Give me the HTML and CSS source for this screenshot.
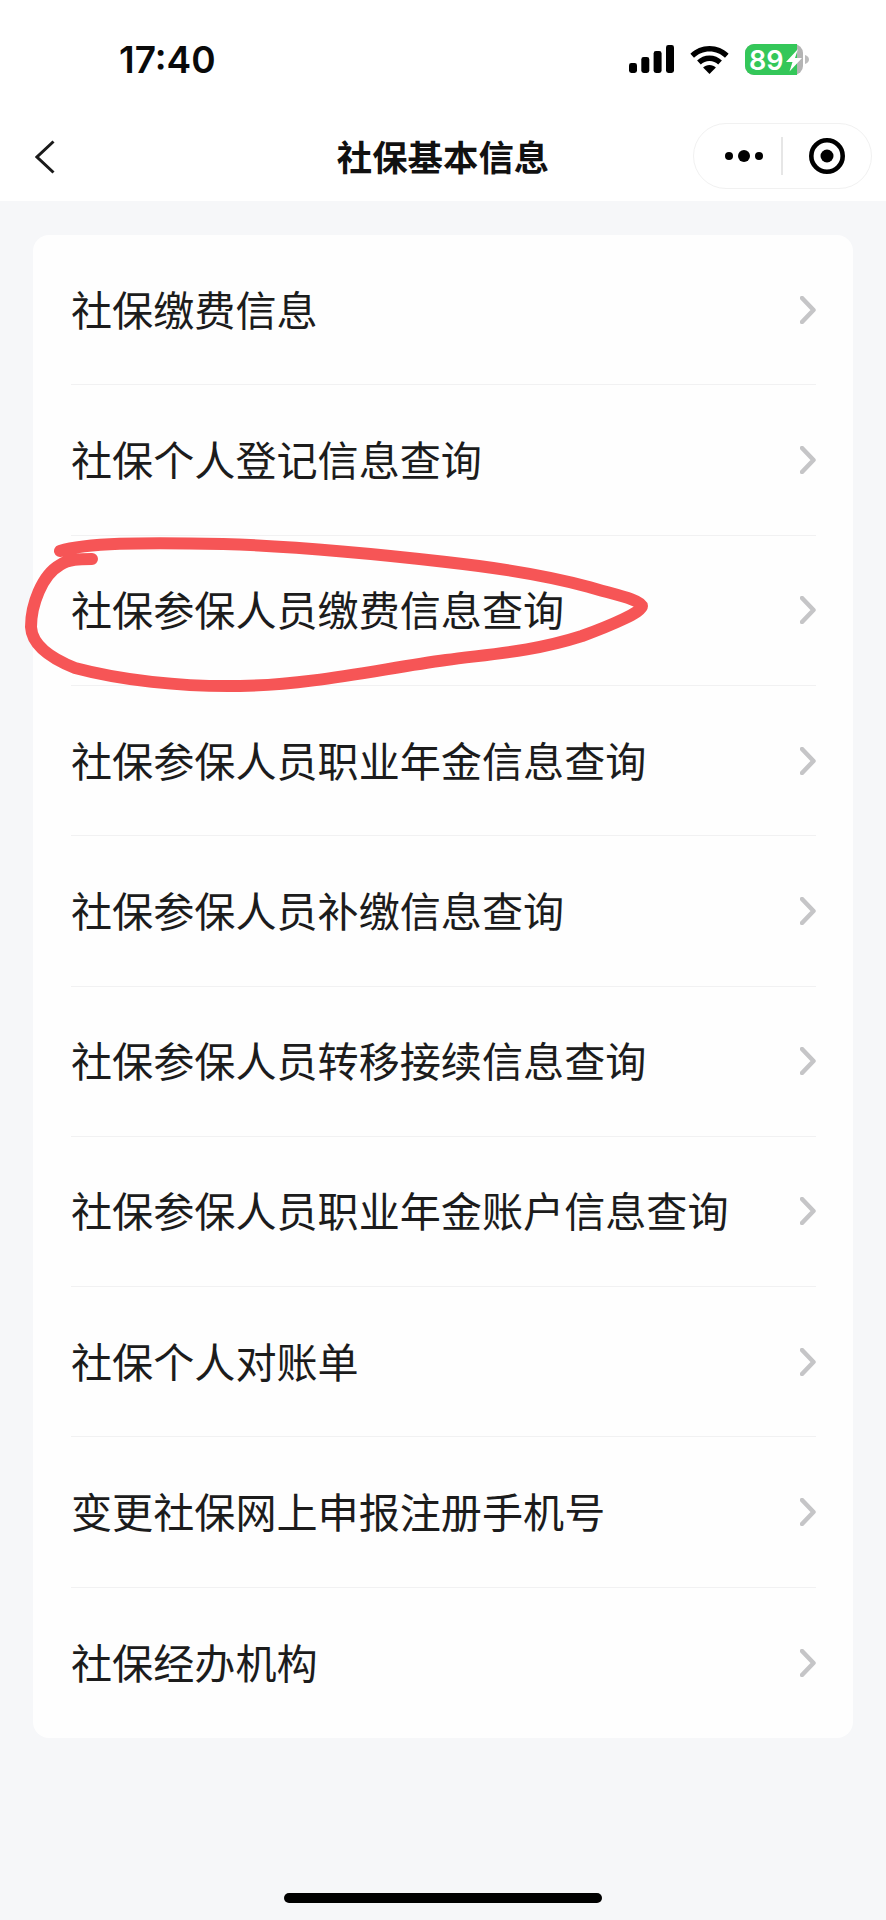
FILE: index.html
```html
<!DOCTYPE html>
<html lang="zh-CN">
<head>
<meta charset="utf-8">
<title>社保基本信息</title>
<link rel="stylesheet" href="styles.css">
</head>
<body>
<div class="page">
  <header class="header">
    <div class="status">
      <span class="time">17:40</span>
      <div class="status-icons">
        <svg class="signal" viewBox="0 0 45 28" aria-hidden="true">
          <rect x="0" y="18" width="8" height="10" rx="2.4"/>
          <rect x="12.3" y="12" width="8" height="16" rx="2.4"/>
          <rect x="24.6" y="6" width="8" height="22" rx="2.4"/>
          <rect x="37" y="0" width="8" height="28" rx="2.4"/>
        </svg>
        <svg class="wifi" viewBox="0 0 39 28" aria-hidden="true">
          <path d="M19.5 0C12 0 5.4 3 .4 7.8l3.6 3.9C8 7.8 13.4 5.4 19.5 5.4s11.5 2.4 15.5 6.3l3.6-3.9C33.6 3 27 0 19.5 0z"/>
          <path d="M19.5 9.6c-4.8 0-9.2 1.9-12.4 5l3.7 3.9c2.3-2.2 5.3-3.5 8.7-3.5s6.4 1.3 8.7 3.5l3.7-3.9c-3.2-3.1-7.6-5-12.4-5z"/>
          <path d="M19.5 19c-2.5 0-4.8 1-6.4 2.6l6.4 6.4 6.4-6.4C24.3 20 22 19 19.500 19z"/>
        </svg>
        <svg class="battery" viewBox="0 0 64 31" role="img" aria-label="89">
          <path class="bat-nub" d="M60 11c2.500.6 4 2.300 4 4.500s-1.500 3.900-4 4.500z"/>
          <rect class="bat-gray" x="0" y="0" width="58" height="31" rx="9"/>
          <path class="bat-green" d="M9 0h43v31H9a9 9 0 0 1-9-9V9a9 9 0 0 1 9-9z"/>
          <text class="bat-text" x="4" y="25.500">89</text>
          <path class="bat-bolt" d="M53 5 41 18h6.500l-3 9.500L57 14h-7z"/>
        </svg>
      </div>
    </div>
    <nav class="nav">
      <svg class="back" viewBox="0 0 20 34" aria-hidden="true"><path d="M18.500 1.500 2 17l16.500 15.500"/></svg>
      <h1 class="title">社保基本信息</h1>
      <div class="capsule">
        <svg class="more" viewBox="0 0 38 12" aria-hidden="true">
          <circle cx="4" cy="6" r="4"/><circle cx="19" cy="6" r="6"/><circle cx="34" cy="6" r="4"/>
        </svg>
        <span class="capsule-line"></span>
        <svg class="target" viewBox="0 0 36 36" aria-hidden="true">
          <circle class="target-ring" cx="18" cy="18" r="15.700"/><circle cx="18" cy="18" r="6.500"/>
        </svg>
      </div>
    </nav>
  </header>

  <main class="main">
    <ul class="card">
      <li class="row"><span class="row-text">社保缴费信息</span><svg class="chev" viewBox="0 0 16 28" aria-hidden="true"><path d="M2 2l11.500 12L2 26"/></svg></li>
      <li class="row"><span class="row-text">社保个人登记信息查询</span><svg class="chev" viewBox="0 0 16 28" aria-hidden="true"><path d="M2 2l11.500 12L2 26"/></svg></li>
      <li class="row"><span class="row-text">社保参保人员缴费信息查询</span><svg class="chev" viewBox="0 0 16 28" aria-hidden="true"><path d="M2 2l11.500 12L2 26"/></svg></li>
      <li class="row"><span class="row-text">社保参保人员职业年金信息查询</span><svg class="chev" viewBox="0 0 16 28" aria-hidden="true"><path d="M2 2l11.500 12L2 26"/></svg></li>
      <li class="row"><span class="row-text">社保参保人员补缴信息查询</span><svg class="chev" viewBox="0 0 16 28" aria-hidden="true"><path d="M2 2l11.500 12L2 26"/></svg></li>
      <li class="row"><span class="row-text">社保参保人员转移接续信息查询</span><svg class="chev" viewBox="0 0 16 28" aria-hidden="true"><path d="M2 2l11.500 12L2 26"/></svg></li>
      <li class="row"><span class="row-text">社保参保人员职业年金账户信息查询</span><svg class="chev" viewBox="0 0 16 28" aria-hidden="true"><path d="M2 2l11.500 12L2 26"/></svg></li>
      <li class="row"><span class="row-text">社保个人对账单</span><svg class="chev" viewBox="0 0 16 28" aria-hidden="true"><path d="M2 2l11.500 12L2 26"/></svg></li>
      <li class="row"><span class="row-text">变更社保网上申报注册手机号</span><svg class="chev" viewBox="0 0 16 28" aria-hidden="true"><path d="M2 2l11.500 12L2 26"/></svg></li>
      <li class="row"><span class="row-text">社保经办机构</span><svg class="chev" viewBox="0 0 16 28" aria-hidden="true"><path d="M2 2l11.500 12L2 26"/></svg></li>
    </ul>
  </main>

  <div class="home-bar"></div>

  <svg class="scribble" viewBox="0 0 886 1920" aria-hidden="true">
    <path d="M60 551C85 543 140 542 223 544C290 546 350 551 446 562C500 568 545 575 589 587C612 594 642 600 642 606C642 612 612 625 582 636C532 652 490 654 446 660C380 669 310 685 240 686C180 687 120 680 75 668C50 658 32 645 31 627C31 605 42 575 60 565C68 559 80 559 92 559"/>
  </svg>
</div>
</body>
</html>
```
FILE: styles.css
```css
* { box-sizing: border-box; }
html, body { margin: 0; padding: 0; }
body { background: #f6f7f9; font-family: "Noto Sans CJK SC", "Noto Sans", sans-serif; }

.page {
  position: relative;
  width: 886px;
  height: 1920px;
  overflow: hidden;
  display: flex;
  flex-direction: column;
}

.header { height: 201px; background: #fff; flex: none; }

.status {
  height: 113px;
  padding: 44px 77px 0 119px;
  display: flex;
  justify-content: space-between;
  align-items: flex-start;
}
.time {
  font: 600 37px/32px Inter, "Liberation Sans", sans-serif;
  color: #0a0a0a;
}
.status-icons { display: flex; align-items: flex-start; }
.signal { width: 45px; height: 28px; margin-top: 1px; fill: #000; }
.wifi { width: 39px; height: 28px; margin: 2px 0 0 16px; fill: #000; }
.battery { width: 64px; height: 31px; margin-left: 16px; }
.bat-nub { fill: #bdbdbd; }
.bat-gray { fill: #b4b4b4; }
.bat-green { fill: #34c759; }
.bat-text { font: 600 27px Inter, "Liberation Sans", sans-serif; fill: #fff; }
.bat-bolt { fill: #fff; }

.nav {
  height: 88px;
  position: relative;
  display: flex;
  align-items: center;
  justify-content: center;
}
.back {
  position: absolute;
  left: 35px;
  top: 27px;
  width: 20px;
  height: 34px;
  fill: none;
  stroke: #1a1a1a;
  stroke-width: 3px;
}
.title {
  margin: 0 0 2px;
  font-size: 35.400px;
  font-weight: 700;
  line-height: 48px;
  color: #111;
}
.capsule {
  position: absolute;
  left: 693px;
  top: 10px;
  width: 179px;
  height: 66px;
  border: 1.500px solid #f1f1f1;
  border-radius: 33px;
  background: #fff;
  display: flex;
  align-items: center;
  padding-left: 31px;
}
.more { width: 38px; height: 12px; fill: #000; flex: none; }
.capsule-line { width: 2px; height: 38px; background: #e6e6e6; margin-left: 18px; flex: none; }
.target { width: 36px; height: 36px; margin-left: 26px; fill: #000; flex: none; }
.target .target-ring { fill: none; stroke: #000; stroke-width: 4.600px; }

.main { padding: 34px 33px 0; flex: none; }
.card {
  list-style: none;
  margin: 0;
  padding: 0 37px 0 38px;
  height: 1503px;
  background: #fefefe;
  border-radius: 16px;
  display: grid;
  grid-template-rows: repeat(10, 1fr);
}
.row {
  display: flex;
  align-items: center;
  justify-content: space-between;
  border-bottom: 1.500px solid #f1f1f2;
}
.row:last-child { border-bottom: 0; }
.row-text {
  font-size: 41.100px;
  line-height: 56px;
  margin-bottom: 4px;
  color: #1c1c1c;
  white-space: nowrap;
}
.chev {
  width: 16px;
  height: 28px;
  fill: none;
  stroke: #c5c5c7;
  stroke-width: 4.500px;
  stroke-linecap: round;
  stroke-linejoin: round;
  flex: none;
}

.home-bar {
  width: 318px;
  height: 10px;
  border-radius: 5px;
  background: #000;
  margin: auto auto 17px;
  flex: none;
}

.scribble {
  position: absolute;
  left: 0;
  top: 0;
  width: 886px;
  height: 1920px;
  pointer-events: none;
  fill: none;
  stroke: #f65556;
  stroke-width: 12px;
  stroke-linecap: round;
  stroke-linejoin: round;
}
```
